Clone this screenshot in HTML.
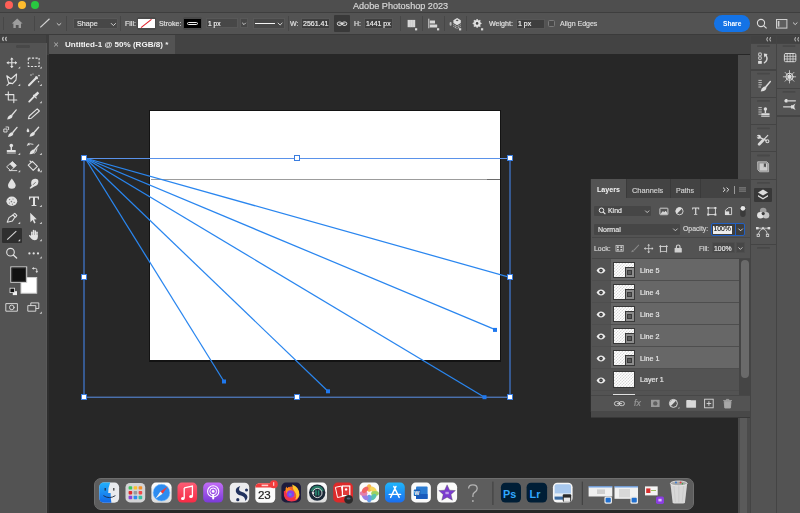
<!DOCTYPE html>
<html><head><meta charset="utf-8">
<style>
*{margin:0;padding:0;box-sizing:border-box}
html,body{width:800px;height:513px;overflow:hidden;background:#272727;font-family:"Liberation Sans",sans-serif;color:#d6d6d6}
.a{position:absolute}
.t{position:absolute;white-space:nowrap;line-height:1;will-change:transform;-webkit-text-stroke:0.18px currentColor}
svg{position:absolute;overflow:visible}
</style></head><body>
<!-- title bar -->
<div class="a" style="left:0;top:0;width:800px;height:12px;background:#4e4e4e"></div>
<div class="a" style="left:0;top:12px;width:800px;height:1px;background:#3e3e3e"></div>
<div class="a" style="left:5px;top:0.5px;width:8px;height:8px;border-radius:50%;background:#fe5f57"></div>
<div class="a" style="left:18px;top:0.5px;width:8px;height:8px;border-radius:50%;background:#febc2e"></div>
<div class="a" style="left:31px;top:0.5px;width:8px;height:8px;border-radius:50%;background:#28c840"></div>
<div class="t" style="left:353px;top:1.5px;font-size:9.1px;color:#d8d8d8">Adobe Photoshop 2023</div>

<!-- options bar -->
<div class="a" style="left:0;top:13px;width:800px;height:21.4px;background:#535353"></div>
<div class="a" style="left:0;top:34.4px;width:800px;height:1px;background:#3b3b3b"></div>


<!-- options items -->
<div class="a" style="left:3px;top:17px;width:1px;height:13px;background:#474747"></div>
<div class="a" style="left:34px;top:16px;width:1px;height:15px;background:#474747"></div>
<div class="a" style="left:66px;top:16px;width:1px;height:15px;background:#474747"></div>
<svg style="left:0;top:0" width="800" height="35">
 <path d="M11.8 23.6 L17.2 18.4 L22.6 23.6 L21 23.6 L21 28 L18.6 28 L18.6 25 L15.8 25 L15.8 28 L13.4 28 L13.4 23.6 Z" fill="#9d9d9d"/>
 <line x1="40.3" y1="27.4" x2="49.5" y2="18.8" stroke="#d4d4d4" stroke-width="1.2"/>
 <path d="M56.8 23.2 L59 25.3 L61.2 23.2" fill="none" stroke="#c8c8c8" stroke-width="1"/>
</svg>
<div class="a" style="left:73px;top:18px;width:45px;height:11px;background:#474747;border:1px solid #585858;border-radius:1px"></div>
<div class="t" style="left:77px;top:20.4px;font-size:7.2px;color:#e0e0e0">Shape</div>
<svg style="left:0;top:0" width="800" height="35">
 <path d="M111 23.2 L113.4 25.6 L115.8 23.2" fill="none" stroke="#d0d0d0" stroke-width="1"/>
</svg>
<div class="a" style="left:120px;top:16px;width:1px;height:15px;background:#474747"></div>
<div class="t" style="left:124.7px;top:20.4px;font-size:7px;color:#e0e0e0">Fill:</div>
<div class="a" style="left:137px;top:17px;width:19px;height:13px;background:#4a4a4a;border-radius:2px"></div>
<div class="a" style="left:138px;top:19px;width:16.5px;height:9px;background:#ffffff"></div>
<svg style="left:0;top:0" width="800" height="35"><line x1="141" y1="27.6" x2="151.5" y2="19.4" stroke="#e0202a" stroke-width="1.1"/></svg>
<div class="t" style="left:158.8px;top:20.8px;font-size:7.1px;color:#e0e0e0">Stroke:</div>
<div class="a" style="left:182.5px;top:17px;width:19.5px;height:13px;background:#4a4a4a;border-radius:2px"></div>
<div class="a" style="left:184px;top:19px;width:16.5px;height:9px;background:#000000"></div>
<div class="a" style="left:187px;top:22px;width:10.5px;height:3.4px;border:1px solid #f0f0f0;border-radius:1.5px"></div>
<div class="a" style="left:205.8px;top:18.2px;width:32.5px;height:9.6px;background:#474747;border:1px solid #585858"></div>
<div class="t" style="left:207.6px;top:21px;font-size:6.6px;color:#f2f2f2">1 px</div>
<div class="a" style="left:240px;top:18.2px;width:8px;height:9.6px;background:#474747;border:1px solid #585858"></div>
<svg style="left:0;top:0" width="800" height="35"><path d="M242.2 22.8 L244 24.6 L245.8 22.8" fill="none" stroke="#d0d0d0" stroke-width="1"/></svg>
<div class="a" style="left:253px;top:17.8px;width:31.5px;height:11px;background:#474747;border:1px solid #585858"></div>
<div class="a" style="left:255px;top:22.8px;width:20px;height:1.4px;background:#f4f4f4"></div>
<svg style="left:0;top:0" width="800" height="35"><path d="M277.8 22.8 L280.1 25 L282.4 22.8" fill="none" stroke="#d0d0d0" stroke-width="1"/></svg>
<div class="a" style="left:288px;top:16px;width:1px;height:14.6px;background:#474747"></div>
<div class="t" style="left:289.6px;top:20.4px;font-size:7px;color:#e0e0e0">W:</div>
<div class="a" style="left:301.3px;top:18.2px;width:28.7px;height:10.4px;background:#3e3e3e;border:1px solid #575757"></div>
<div class="t" style="left:303px;top:20.4px;font-size:7px;color:#ececec">2561.41</div>
<div class="a" style="left:334.3px;top:15.1px;width:15.7px;height:16.6px;background:#393939;border-radius:1px"></div>
<svg style="left:0;top:0" width="800" height="35">
 <rect x="337.3" y="22" width="4.6" height="3.4" rx="1.7" fill="none" stroke="#dcdcdc" stroke-width="1"/>
 <rect x="342.2" y="22" width="4.6" height="3.4" rx="1.7" fill="none" stroke="#dcdcdc" stroke-width="1"/>
 <line x1="339.5" y1="23.7" x2="344.5" y2="23.7" stroke="#dcdcdc" stroke-width="1"/>
</svg>
<div class="t" style="left:353.8px;top:20.4px;font-size:7px;color:#e0e0e0">H:</div>
<div class="a" style="left:364.4px;top:18.2px;width:28.6px;height:10.4px;background:#3e3e3e;border:1px solid #575757"></div>
<div class="t" style="left:366.4px;top:20.9px;font-size:6.95px;color:#ececec">1441 px</div>
<div class="a" style="left:400px;top:16px;width:1px;height:15px;background:#474747"></div>
<div class="a" style="left:422px;top:16px;width:1px;height:15px;background:#474747"></div>
<div class="a" style="left:444px;top:16px;width:1px;height:15px;background:#474747"></div>
<div class="a" style="left:466px;top:16px;width:1px;height:15px;background:#474747"></div>
<svg style="left:0;top:0" width="800" height="35">
 <rect x="407.6" y="19.9" width="7.6" height="7.3" fill="#d8d8d8"/>
 <line x1="410.2" y1="20" x2="410.2" y2="27.2" stroke="#bcbcbc" stroke-width="0.5"/>
 <line x1="412.7" y1="20" x2="412.7" y2="27.2" stroke="#bcbcbc" stroke-width="0.5"/>
 <rect x="415" y="28.2" width="2.2" height="2.2" fill="#d8d8d8"/>
 <line x1="428.8" y1="18.7" x2="428.8" y2="28.3" stroke="#d8d8d8" stroke-width="1"/>
 <rect x="429.8" y="20.5" width="5.2" height="3" fill="#d8d8d8"/>
 <rect x="429.8" y="24.5" width="7.4" height="3" fill="#d8d8d8"/>
 <rect x="437" y="28.2" width="2.2" height="2.2" fill="#d8d8d8"/>
 <rect x="449.6" y="22" width="2" height="3.8" rx="1" fill="#b8b8b8"/>
 <path d="M453.4 20.2 L457.1 18 L460.8 20.2 V23 L457.1 25.2 L453.4 23 Z" fill="#e0e0e0"/>
 <path d="M455.6 20.4 L457.1 19.6 L458.6 20.4 L457.1 21.2 Z" fill="#555"/>
 <path d="M453.4 24.6 L457.1 26.8 L460.8 24.6 M453.4 26.4 L457.1 28.6 L460.8 26.4" fill="none" stroke="#d0d0d0" stroke-width="0.9" stroke-dasharray="1.2 0.6"/>
 <rect x="459" y="28.2" width="2.2" height="2.2" fill="#d8d8d8"/>
 <path d="M477.10 19.00 L478.25 20.63 L480.21 20.29 L479.87 22.25 L481.50 23.40 L479.87 24.55 L480.21 26.51 L478.25 26.17 L477.10 27.80 L475.95 26.17 L473.99 26.51 L474.33 24.55 L472.70 23.40 L474.33 22.25 L473.99 20.29 L475.95 20.63 Z" fill="#e2e2e2" stroke="#e2e2e2" stroke-width="0.6" stroke-linejoin="round"/>
 <circle cx="477.1" cy="23.4" r="1.3" fill="#444"/>
 <rect x="481" y="28.2" width="2.2" height="2.2" fill="#d8d8d8"/>
</svg>
<div class="t" style="left:488.8px;top:21.1px;font-size:7.1px;color:#e0e0e0">Weight:</div>
<div class="a" style="left:515.8px;top:18.5px;width:29.2px;height:10px;background:#3e3e3e;border:1px solid #575757"></div>
<div class="t" style="left:517.5px;top:20.4px;font-size:7px;color:#f2f2f2">1 px</div>
<div class="a" style="left:548px;top:20px;width:6.8px;height:6.8px;border:1px solid #7a7a7a;border-radius:1.5px;background:#4a4a4a"></div>
<div class="t" style="left:559.6px;top:20.4px;font-size:7px;color:#dcdcdc">Align Edges</div>
<div class="a" style="left:713.7px;top:15.4px;width:36px;height:16.4px;background:#1473e6;border-radius:8.2px"></div>
<div class="t" style="left:722.7px;top:21px;font-size:6.6px;font-weight:bold;color:#ffffff;-webkit-text-stroke:0">Share</div>
<svg style="left:0;top:0" width="800" height="35">
 <circle cx="761" cy="23" r="3.6" fill="none" stroke="#dcdcdc" stroke-width="1.1"/>
 <line x1="763.6" y1="25.6" x2="766.6" y2="28.4" stroke="#dcdcdc" stroke-width="1.2"/>
 <rect x="776.5" y="19.5" width="10.4" height="8.6" fill="#5e5e5e" stroke="#cfcfcf" stroke-width="1"/>
 <rect x="777.8" y="21" width="1.6" height="5.6" fill="#cfcfcf"/>
 <path d="M793 22.5 L795.2 24.6 L797.4 22.5" fill="none" stroke="#cfcfcf" stroke-width="1"/>
</svg>

<!-- tab bar -->
<div class="a" style="left:0;top:35.4px;width:800px;height:19px;background:#434343"></div>
<div class="a" style="left:48.6px;top:35.4px;width:126.4px;height:19px;background:#535353"></div>
<svg style="left:0;top:0" width="80" height="60"><path d="M54.2 42.6 L58 46.4 M58 42.6 L54.2 46.4" stroke="#bdbdbd" stroke-width="0.9"/></svg>
<div class="t" style="left:64.6px;top:40.5px;font-size:8.07px;font-weight:bold;color:#f4f4f4;-webkit-text-stroke:0">Untitled-1 @ 50% (RGB/8) *</div>

<!-- toolbar -->
<div class="a" style="left:0;top:35px;width:46.4px;height:8px;background:#434343"></div>
<div class="a" style="left:0;top:43px;width:46px;height:470px;background:#535353"></div>
<div class="a" style="left:46.4px;top:35px;width:2.6px;height:19.5px;background:#3d3d3d"></div>
<div class="a" style="left:46.4px;top:54.5px;width:2.6px;height:458.5px;background:#2e2e2e"></div>
<div class="a" style="left:45.6px;top:43px;width:0.9px;height:470px;background:#595959"></div>


<!-- toolbar icons -->
<div class="a" style="left:16.4px;top:45.4px;width:13.5px;height:2.3px;background:#484848;border-radius:1.2px"></div>
<div class="a" style="left:1.6px;top:228px;width:20.3px;height:14.7px;background:#2f2f2f;border-radius:1px"></div>
<svg style="left:0;top:0" width="46" height="330">
 <defs><g id="br"><path d="M0.1 10.1 Q0.5 6.9 3.1 5.6 Q4.6 5 5.3 6.1 Q5.9 7.4 4.6 8.7 Q2.8 10.1 0.1 10.1 Z"/><path d="M4.2 5.5 L9 0 Q9.9 -0.2 9.9 0.8 L5.3 6.5 Z"/></g></defs>
 <g fill="none" stroke="#e2e2e2" stroke-width="1.1" stroke-linecap="round" stroke-linejoin="round">
  <path d="M3.2 37.2 L2.6 38.9 L3.2 40.6 M6.2 37.2 L5.6 38.9 L6.2 40.6" stroke="#d8d8d8"/>
  <!-- move -->
  <path d="M11.8 58.4 V67.2 M7.2 62.8 H16.4"/>
  <!-- marquee -->
  <rect x="28.3" y="58.1" width="10.8" height="8.4" stroke-dasharray="2.2 1.4" stroke-linecap="butt"/>
  <!-- lasso -->
  <path d="M6.8 75.8 L11 79 L16.6 74 L16 80 L12.6 83.6 L8.6 82.6 Z M9.6 82.8 L7 85.4"/>
  <!-- wand -->
  <path d="M29 85.3 L36.8 77.2" stroke-width="2"/>
  <!-- crop -->
  <path d="M8.3 91.7 V100 H16.8 M5.4 94.6 H13.8 V102.6"/>
  <!-- eyedropper -->
  <path d="M29.2 101.6 L35 95.6" stroke-width="1.8"/>
  <!-- pencil -->
  <path d="M28.4 118.8 L29.2 116 L37.2 108.8 L39.4 111 L31.4 118.2 Z"/>
  <!-- history small square + arrow -->
  <rect x="4.2" y="129" width="2.8" height="3" stroke-width="0.9"/>
  <path d="M6 127 H8.6 V129.6" stroke-width="0.9"/>
  <!-- history brush arrow -->
  <path d="M27.2 145.3 Q30 142.6 33 144.2 M37 148.8 Q36.6 152 34.2 153.6" stroke-width="0.9"/>
  <!-- eraser -->
  <path d="M6.9 166.6 L12.4 161.6 L16.4 165.4 L11 170.3 Z M9.2 170.6 H16.8" stroke-width="0.9"/>
  <!-- bucket -->
  <path d="M28.2 165.2 L32.4 161.4 L37.4 166.4 L33.2 170.4 Z M30 161 L31.4 162.4" />
  <!-- pen -->
  <path d="M7.2 222.2 L9 217.6 L13 215 L15 217 L12.4 221 Z M13 214.6 L14.8 213.4 L16.8 215.4 L15.6 217.2"/>
  <!-- zoom -->
  <circle cx="10.5" cy="252.2" r="3.8" stroke-width="1.1"/>
  <path d="M13.3 255 L16.6 258" stroke-width="1.4"/>
  <!-- quick mask -->
  <rect x="6.2" y="303.6" width="11.2" height="7.6" stroke-width="0.9"/>
  <circle cx="11.8" cy="307.4" r="2.3" stroke-width="0.9"/>
  <!-- screen mode -->
  <rect x="31.2" y="302.9" width="7.6" height="5.6" stroke-width="0.9"/>
  <rect x="28.2" y="305.6" width="7.6" height="5.6" stroke-width="0.9" fill="#535353"/>
  <!-- swap arrows -->
  <path d="M33 268.4 H35.4 Q36.8 268.4 36.8 269.8 V271.6" stroke-width="0.9"/><path d="M32 268.4 L33.8 267 V269.8 Z M36.8 273 L35.4 271.2 H38.2 Z" fill="#e2e2e2" stroke="none"/>
 </g>
 <g fill="#e2e2e2">
  <path d="M11.8 57.6 L10 59.6 H13.6 Z M11.8 68 L10 66 H13.6 Z M6.6 62.8 L8.6 61 V64.6 Z M17 62.8 L15 61 V64.6 Z"/>
  <path d="M18.0 68.6 H20.2 V66.4 Z M39.6 68.6 H41.8 V66.4 Z M18.0 86.0 H20.2 V83.8 Z M39.6 86.0 H41.8 V83.8 Z M39.6 103.2 H41.8 V101.0 Z M18.0 155.0 H20.2 V152.8 Z M39.6 155.0 H41.8 V152.8 Z M18.0 172.2 H20.2 V170.0 Z M39.6 172.2 H41.8 V170.0 Z M39.6 207.0 H41.8 V204.8 Z M18.0 224.0 H20.2 V221.8 Z M39.6 224.0 H41.8 V221.8 Z M18.0 241.2 H20.2 V239.0 Z M39.6 241.2 H41.8 V239.0 Z M39.6 258.4 H41.8 V256.2 Z M39.6 313.8 H41.8 V311.6 Z" fill="#d4d4d4"/>
  <!-- wand sparkles -->
  <circle cx="31" cy="75" r="0.7"/><circle cx="39" cy="75.6" r="0.8"/><circle cx="38.6" cy="81.8" r="0.7"/><circle cx="33" cy="74" r="0.6"/>
  <path d="M36 76 L38.2 78.2 L37 79.4 L34.8 77.2 Z"/>
  <!-- eyedropper head -->
  <path d="M34 94.8 L37.6 91.6 L39.2 93.2 L36 96.8 Z"/>
  <path d="M33.2 95 L36.6 98.4" stroke="#e2e2e2" stroke-width="1.1"/>
  <!-- brushes -->
  <use href="#br" transform="translate(7,109.3)"/>
  <use href="#br" transform="translate(7.8,126.8)"/>
  <use href="#br" transform="translate(29.4,126.6)"/>
  <path d="M27.9 128 Q26.4 130.4 26.6 131.2 A1.5 1.5 0 0 0 29.4 131.2 Q29.4 130.4 27.9 128 Z"/>
  <use href="#br" transform="translate(29.4,144.2)"/>
  <path d="M27 144.2 L29.4 142.6 L29.4 145.4 Z"/>
  <!-- stamp -->
  <circle cx="11.3" cy="145.6" r="1.8"/>
  <rect x="10.6" y="146.6" width="1.4" height="3.4"/>
  <rect x="6.8" y="150" width="9" height="2" rx="0.6"/>
  <rect x="6.8" y="152.4" width="9" height="1.2" fill="#bcbcbc"/>
  <!-- eraser fill -->
  <path d="M9.6 164.1 L12.4 161.6 L16.4 165.4 L13.6 168 Z"/>
  <!-- bucket drop -->
  <path d="M38.8 167.6 Q37.4 169.8 37.6 170.4 A1.2 1.2 0 0 0 40 170.4 Q40 169.8 38.8 167.6 Z"/>
  <!-- blur drop -->
  <path d="M11.8 178.6 Q8 183.6 8 185.2 A3.8 3.6 0 0 0 15.6 185.2 Q15.6 183.6 11.8 178.6 Z"/>
  <!-- smudge leaf -->
  <path d="M31.2 184 Q30.6 179.4 35 178.8 Q38.6 178.6 38.4 181.8 Q38.2 185.8 34.2 186.4 L30.6 188.8 L29.6 188 L31.8 185.6 Q31.4 185 31.2 184 Z"/><path d="M33 184.8 L35.6 182.2" stroke="#535353" stroke-width="0.8"/>
  <!-- sponge -->
  <ellipse cx="11.8" cy="201.3" rx="5.4" ry="4.7"/>
  <!-- T -->
  <path d="M29 196.6 H39 V199.4 H38 L37.6 197.8 H35 V205 H36.4 V206 H31.6 V205 H33 V197.8 H30.4 L30 199.4 H29 Z"/>
  <!-- arrow -->
  <path d="M30.2 212.8 L36.8 219.2 L34 219.4 L35.6 222.8 L34.2 223.4 L32.6 220 L30.4 222.2 Z"/>
  <!-- hand -->
  <rect x="31.1" y="231.4" width="1.5" height="6" rx="0.75"/>
  <rect x="32.8" y="229.8" width="1.5" height="7" rx="0.75"/>
  <rect x="34.5" y="230.2" width="1.5" height="7" rx="0.75"/>
  <rect x="36.2" y="231.6" width="1.5" height="6" rx="0.75"/>
  <path d="M31.1 235 H37.7 V237.6 Q37.6 240.2 34.6 240.2 Q32.4 240.2 31.4 238.8 L29 236 Q28.8 235.2 29.6 235 Q30.2 235 31.1 236 Z"/>
  <!-- dots -->
  <circle cx="29.4" cy="253.4" r="1.1"/><circle cx="33.7" cy="253.4" r="1.1"/><circle cx="38" cy="253.4" r="1.1"/>
  <!-- default colors -->
  <rect x="12.8" y="291.2" width="4.2" height="3.9" fill="#f0f0f0"/>
  <rect x="10" y="288.2" width="4.6" height="4.4" fill="#111" stroke="#e2e2e2" stroke-width="0.8"/>
 </g>
 <!-- sponge texture -->
 <g fill="#7a7a7a">
  <circle cx="9.6" cy="199.6" r="0.7"/><circle cx="13" cy="199" r="0.6"/><circle cx="11.4" cy="201.6" r="0.8"/><circle cx="14.2" cy="202.4" r="0.6"/><circle cx="9.4" cy="203" r="0.6"/><circle cx="12.4" cy="204.2" r="0.6"/>
 </g>
 <line x1="7.2" y1="239.6" x2="16.3" y2="231.2" stroke="#d6d6d6" stroke-width="1.1"/>
 <!-- fg bg -->
 <rect x="21" y="277.5" width="15.7" height="15.7" fill="#ffffff" stroke="#cfcfcf" stroke-width="1"/>
 <rect x="10.8" y="266.9" width="15.9" height="15.4" fill="#111111" stroke="#d4d4d4" stroke-width="1"/>
 <rect x="11.9" y="268" width="13.7" height="13.2" fill="none" stroke="#3a3a3a" stroke-width="0.8"/>
</svg>

<!-- canvas -->
<div class="a" style="left:49px;top:54.4px;width:689px;height:459px;background:#272727"></div>
<div class="a" style="left:149.3px;top:109.5px;width:351.8px;height:252px;background:#131313"></div>
<div class="a" style="left:150.3px;top:110.6px;width:349.9px;height:249.6px;background:#ffffff"></div>


<div class="a" style="left:150.5px;top:179px;width:349.3px;height:1px;background:#9c9c9c"></div>
<div class="a" style="left:487px;top:179px;width:12.8px;height:1px;background:#6a6a6a"></div>
<svg style="left:0;top:0" width="800" height="513">
 <g fill="none" stroke-width="1.3">
  <path d="M84 158.5 H510 M84 397.2 H510" stroke="#5a92ea" stroke-width="1"/>
  <path d="M84 158.5 V397.2 M510 158.5 V397.2" stroke="#4178d0" stroke-width="1.25"/>
 </g>
 <g stroke="#2a86ef" stroke-width="1.25" fill="none">
  <line x1="85" y1="158" x2="510" y2="277.3"/>
  <line x1="85" y1="158" x2="495.2" y2="329.6"/>
  <line x1="85" y1="158" x2="484.5" y2="397.2"/>
  <line x1="85" y1="158" x2="328" y2="391.3"/>
  <line x1="85" y1="158" x2="224" y2="381.5"/>
 </g>
 <g fill="#1f78ee">
  <rect x="222" y="379.5" width="4" height="4"/>
  <rect x="326" y="389.3" width="4" height="4"/>
  <rect x="482.5" y="395.2" width="4" height="4"/>
  <rect x="493" y="327.9" width="4" height="4"/>
 </g>
 <g fill="#ffffff" stroke="#3a7de0" stroke-width="1">
  <rect x="81.5" y="155.5" width="5" height="5"/>
  <rect x="294.5" y="155.5" width="5" height="5"/>
  <rect x="507.5" y="155.5" width="5" height="5"/>
  <rect x="81.5" y="274.5" width="5" height="5"/>
  <rect x="507.5" y="274.5" width="5" height="5"/>
  <rect x="81.5" y="394.5" width="5" height="5"/>
  <rect x="294.5" y="394.5" width="5" height="5"/>
  <rect x="507.5" y="394.5" width="5" height="5"/>
 </g>
</svg>


<!-- right strips -->
<div class="a" style="left:738px;top:54.5px;width:11.5px;height:459px;background:#4b4b4b"></div>
<div class="a" style="left:739.5px;top:418px;width:7.7px;height:95px;background:#5a5a5a"></div>
<div class="a" style="left:749.5px;top:35px;width:51px;height:478px;background:#444444"></div>
<div class="a" style="left:751px;top:35.5px;width:24.5px;height:7.5px;background:#424242"></div>
<div class="a" style="left:777.4px;top:35.5px;width:22.6px;height:7.5px;background:#424242"></div>
<div class="a" style="left:751px;top:43.5px;width:24.5px;height:25.5px;background:#535353"></div>
<div class="a" style="left:751px;top:71px;width:24.5px;height:26px;background:#535353"></div>
<div class="a" style="left:751px;top:97.8px;width:24.5px;height:26px;background:#535353"></div>
<div class="a" style="left:751px;top:124.8px;width:24.5px;height:26.4px;background:#535353"></div>
<div class="a" style="left:751px;top:152px;width:24.5px;height:26.8px;background:#535353"></div>
<div class="a" style="left:751px;top:179.6px;width:24.5px;height:64.4px;background:#535353"></div>
<div class="a" style="left:751px;top:245px;width:24.5px;height:268px;background:#535353"></div>
<div class="a" style="left:777.4px;top:43.5px;width:22.6px;height:44.4px;background:#535353"></div>
<div class="a" style="left:777.4px;top:89.2px;width:22.6px;height:26.1px;background:#535353"></div>
<div class="a" style="left:777.4px;top:116.5px;width:22.6px;height:396.5px;background:#535353"></div>
<div class="a" style="left:753.8px;top:187.6px;width:18.1px;height:14.6px;background:#383838;border-radius:1px"></div>
<svg style="left:0;top:0" width="800" height="513">
 <g fill="#484848">
  <rect x="757" y="45.2" width="13" height="1.8" rx="0.9"/>
  <rect x="757" y="72.7" width="13" height="1.8" rx="0.9"/>
  <rect x="757" y="100" width="13" height="1.8" rx="0.9"/>
  <rect x="757" y="127.4" width="13" height="1.8" rx="0.9"/>
  <rect x="757" y="154.6" width="13" height="1.8" rx="0.9"/>
  <rect x="757" y="182" width="13" height="1.8" rx="0.9"/>
  <rect x="757" y="247" width="13" height="1.8" rx="0.9"/>
  <rect x="782.5" y="45.2" width="13" height="1.8" rx="0.9"/>
  <rect x="782.5" y="91" width="13" height="1.8" rx="0.9"/>
 </g>
 <g fill="none" stroke="#d8d8d8" stroke-width="0.9" stroke-linecap="round">
  <path d="M767.4 37.6 L766.8 39.3 L767.4 41 M770.4 37.6 L769.8 39.3 L770.4 41"/>
  <path d="M795.4 37.6 L794.8 39.3 L795.4 41 M798.4 37.6 L797.8 39.3 L798.4 41"/>
  <!-- history -->
  <circle cx="760" cy="54.4" r="1.5" stroke="#bdbdbd" stroke-width="1.1"/><circle cx="760" cy="58.1" r="1.5" stroke="#bdbdbd" stroke-width="1.1"/>
  <path d="M764.4 62.8 Q768.4 60 766.2 55.6" stroke-width="1.4"/>
  <!-- brush settings list -->
  <path d="M758.8 80.4 H761.4 M758.8 82.6 H761.4 M758.8 84.8 H761.4 M758.8 87 H760.6" stroke-width="0.8"/>
  <!-- clone list -->
  <path d="M758.8 107.6 H761.4 M758.8 109.8 H761.4 M758.8 112 H761.4 M758.8 114.2 H760.6" stroke-width="0.8"/>
  <!-- tools -->
  <path d="M760.2 137.6 L766 140.4" stroke-width="1.4"/>
  <circle cx="767.4" cy="141.3" r="1.5" stroke-width="1.1"/>
  <path d="M767.8 135.4 L763.4 140" stroke-width="1.1"/>
  <path d="M762.8 140.6 L759.2 144.2" stroke-width="2.8"/>
  <!-- notes -->
  <path d="M758 161.8 H766.8 L768.6 163.6 V171.8 H759.8 L758 170 Z" fill="#8a8a8a" stroke="#c8c8c8" stroke-width="0.8"/>
  <rect x="759.6" y="163.4" width="7.8" height="7.2" fill="#cdcdcd" stroke="none"/>
  <!-- channels -->

  <!-- paths -->
  <path d="M757.6 228.2 H768.6 M763 228.4 Q759 230 758.3 234 M763 228.4 Q767 230 767.5 234" stroke-width="0.8"/>
  <!-- grid -->
  <rect x="784.4" y="53.5" width="11.4" height="8.2" rx="1.2" stroke-width="1"/>
  <path d="M784.4 56.3 H795.8 M784.4 59 H795.8 M787.2 53.5 V61.7 M790.1 53.5 V61.7 M793 53.5 V61.7" stroke-width="0.8"/>
  <!-- wheel -->
  <circle cx="789.5" cy="76.8" r="3.6" stroke-width="1"/>
  <path d="M789.5 70.6 V83 M783.3 76.8 H795.7 M785.1 72.4 L793.9 81.2 M793.9 72.4 L785.1 81.2" stroke-width="0.8"/>
  <!-- sliders -->
  <path d="M787 100.8 H795.4 M783.6 106.8 H791" stroke-width="1.3"/>
 </g>
 <g fill="#dcdcdc">
  <rect x="758.1" y="60.9" width="3.7" height="2.9" />
  <path d="M763.8 53.4 L767.6 54 L764.4 57.6 Z"/>
  <use href="#br" transform="translate(760.6,80.8) scale(1.05)"/>
  <circle cx="765.4" cy="109" r="1.7"/>
  <rect x="764.7" y="110" width="1.4" height="3.2"/>
  <rect x="761.2" y="113.2" width="8.4" height="2" rx="0.5"/>
  <rect x="761.2" y="115.6" width="8.4" height="1.4" fill="#b8b8b8"/>
  <circle cx="758.8" cy="136.8" r="2.1"/>
  <path d="M763.8 163.4 H766 V167.4 L764.9 166.4 L763.8 167.4 Z" fill="#555"/>
  <!-- layers icon -->
  <path d="M763 189.6 L768 192.6 L763 195.6 L758 192.6 Z"/>
  <path d="M758 195 L763 198 L768 195 L768 196.6 L763 199.6 L758 196.6 Z"/>
  <!-- paths anchors -->
  <rect x="756" y="227" width="2.6" height="2.4"/><rect x="767.6" y="227" width="2.6" height="2.4"/>
  <path d="M763 226.8 L764.4 228.2 L763 229.6 L761.6 228.2 Z"/>
  <rect x="757.1" y="234.2" width="2.4" height="2.3" fill="none" stroke="#dcdcdc" stroke-width="0.8"/>
  <rect x="766.3" y="234.2" width="2.4" height="2.3" fill="none" stroke="#dcdcdc" stroke-width="0.8"/>
  <path d="M785.6 99 Q783 100.8 785.6 102.6 L787.4 102.6 L787.4 99 Z"/>
  <path d="M795.6 103.6 Q793 106.8 795.6 110 L792.6 108.4 L791 108.4 L791 105.2 L792.6 105.2 Z"/>
  <rect x="787.6" y="75" width="3.6" height="3.6"/>
 </g>
 <g><circle cx="763.2" cy="211" r="3.3" fill="#9c9c9c"/><circle cx="760.4" cy="215.2" r="3.3" fill="#e2e2e2"/><circle cx="766" cy="215.2" r="3.3" fill="#c4c4c4"/><circle cx="763.2" cy="213.6" r="1.6" fill="#3a3a3a"/></g><rect x="756.4" y="136.2" width="2" height="1.1" fill="#535353"/>
</svg>



<!-- dock -->
<div class="a" style="left:94.3px;top:477.5px;width:599.5px;height:32px;background:#5d5d5d;border:1px solid #6e6e6e;border-radius:7px"></div>
<svg style="left:0;top:0" width="800" height="513">
 <defs>
  <linearGradient id="gf" x1="0" y1="0" x2="0" y2="1"><stop offset="0" stop-color="#22b0fb"/><stop offset="1" stop-color="#1267e6"/></linearGradient>
  <linearGradient id="gm" x1="0" y1="0" x2="0" y2="1"><stop offset="0" stop-color="#fb5c74"/><stop offset="1" stop-color="#f72b45"/></linearGradient>
  <linearGradient id="gp" x1="0" y1="0" x2="0" y2="1"><stop offset="0" stop-color="#c26cf6"/><stop offset="1" stop-color="#7a3ad8"/></linearGradient>
  <linearGradient id="ga" x1="0" y1="0" x2="0" y2="1"><stop offset="0" stop-color="#1fb6fb"/><stop offset="1" stop-color="#1a6ef0"/></linearGradient>
  <linearGradient id="gs" x1="0" y1="0" x2="0" y2="1"><stop offset="0" stop-color="#ffffff"/><stop offset="1" stop-color="#dcdcdc"/></linearGradient>
 </defs>
 <!-- finder -->
 <rect x="99.3" y="482.6" width="19.8" height="20.1" rx="4.6" fill="#e9ebee"/>
 <path d="M103.9 482.6 H110.2 Q108 488 108.2 493 H110.6 Q110.6 498 111.4 502.7 H103.9 Q99.3 502.7 99.3 498.1 V487.2 Q99.3 482.6 103.9 482.6 Z" fill="url(#gf)"/>
 <rect x="104.6" y="488" width="1.2" height="2.6" fill="#1b2a44"/><rect x="113.2" y="488" width="1.2" height="2.6" fill="#333"/>
 <path d="M103.4 495.6 Q109.2 499.6 115.4 495.6" fill="none" stroke="#1b2a44" stroke-width="0.9"/>
 <!-- launchpad -->
 <rect x="125.5" y="482.9" width="19.7" height="19.5" rx="4.5" fill="#d4d4d6"/>
 <g>
  <rect x="128.6" y="486.2" width="3.6" height="3.4" rx="0.8" fill="#3ac65a"/><rect x="133.6" y="486.2" width="3.6" height="3.4" rx="0.8" fill="#fcc02c"/><rect x="138.6" y="486.2" width="3.6" height="3.4" rx="0.8" fill="#f6902a"/>
  <rect x="128.6" y="491" width="3.6" height="3.4" rx="0.8" fill="#e22c2c"/><rect x="133.6" y="491" width="3.6" height="3.4" rx="0.8" fill="#9a9a9a"/><rect x="138.6" y="491" width="3.6" height="3.4" rx="0.8" fill="#f04a4a"/>
  <rect x="128.6" y="495.8" width="3.6" height="3.4" rx="0.8" fill="#8a44d8"/><rect x="133.6" y="495.8" width="3.6" height="3.4" rx="0.8" fill="#2a8cf0"/><rect x="138.6" y="495.8" width="3.6" height="3.4" rx="0.8" fill="#36c0a0"/>
 </g>
 <!-- safari -->
 <rect x="151.4" y="482.6" width="20.2" height="20.2" rx="4.6" fill="url(#gs)"/>
 <circle cx="161.5" cy="492.7" r="8.4" fill="#2d8cf0"/>
 <circle cx="161.5" cy="492.7" r="8.4" fill="none" stroke="#7cc0ff" stroke-width="0.6"/>
 <path d="M167.6 486.6 L162.6 493.8 L160.4 491.6 Z" fill="#f03a3a"/>
 <path d="M155.4 498.8 L160.4 491.6 L162.6 493.8 Z" fill="#f4f4f4"/>
 <!-- music -->
 <rect x="177.5" y="482.6" width="19.6" height="19.9" rx="4.5" fill="url(#gm)"/>
 <path d="M184.2 487.8 L192.4 486 V496.4" fill="none" stroke="#fff" stroke-width="1.3"/>
 <path d="M184.2 488 V498.2" fill="none" stroke="#fff" stroke-width="1.3"/>
 <ellipse cx="182.8" cy="498.4" rx="1.8" ry="1.5" fill="#fff"/><ellipse cx="191" cy="496.6" rx="1.8" ry="1.5" fill="#fff"/>
 <!-- podcasts -->
 <rect x="203.2" y="482.6" width="20" height="20" rx="4.6" fill="url(#gp)"/>
 <circle cx="213.2" cy="491.4" r="5.6" fill="none" stroke="#fff" stroke-width="1.1"/>
 <circle cx="213.2" cy="491.4" r="3.4" fill="none" stroke="#fff" stroke-width="1"/>
 <circle cx="213.2" cy="491.4" r="1.4" fill="#fff"/>
 <rect x="212.2" y="494" width="2" height="5.6" rx="1" fill="#fff"/>
 <!-- scrivener -->
 <rect x="229.8" y="482.8" width="19.4" height="19.8" rx="4.5" fill="#ececee"/>
 <path d="M240.2 486 Q235.4 487.6 235.8 491.2 Q236.4 494.4 241 495.6 Q245 496.6 245.4 501 Q248.8 497.6 246.6 494.8 Q244.6 492.6 240.8 491.6 Q237.6 490.4 240.2 486 Z" fill="#22325e"/>
 <circle cx="246.5" cy="490.1" r="1.5" fill="#22325e"/><circle cx="237.8" cy="499.7" r="1.6" fill="#22325e"/>
 <!-- calendar -->
 <rect x="255.3" y="483.2" width="19.9" height="19.5" rx="4.5" fill="#fafafa"/>
 <path d="M259.8 483.2 H270.7 Q275.2 483.2 275.2 487.7 V487.6 H255.3 V487.7 Q255.3 483.2 259.8 483.2 Z" fill="#f23b3b"/>
 <circle cx="273.8" cy="484.3" r="4" fill="#f23b3b"/>
 <rect x="273.3" y="482.2" width="0.9" height="3.6" fill="#fff"/>
 <rect x="261.6" y="484.6" width="6.6" height="1.6" fill="#ffd0d0"/>
 <!-- firefox -->
 <rect x="281.4" y="482.6" width="19.6" height="19.8" rx="4.5" fill="#1d1b3c"/>
 <circle cx="291.6" cy="493.2" r="6.6" fill="#f0602e"/>
 <path d="M283.8 491.2 Q283 501 291.2 501.4 Q299 501.6 299.6 494.2 Q296.8 497.8 291.6 497.4 Q286.6 496.8 286 490.2 Z" fill="#f2344a"/>
 <path d="M285.6 490.6 Q285.2 487.6 286.6 486.4 L287.2 488.4 L288.4 487 Q290 489.6 292.4 490.2 L291.4 492.6 L286.4 493.2 Z" fill="#ff8a1c"/>
 <path d="M292.2 484.4 Q299.8 487 299.4 494.8 Q298.6 498.6 295.2 499.6 Q297.6 495.4 294.6 491.6 Q292.6 489 292.2 484.4 Z" fill="#ffc62a"/>
 <circle cx="290.6" cy="494" r="3.8" fill="#8c3ee6"/>
 <circle cx="290.2" cy="494.4" r="1.6" fill="#5a7ee8"/>
 <!-- time machine -->
 <rect x="307.3" y="482.6" width="19.7" height="19.9" rx="4.5" fill="url(#gs)"/>
 <circle cx="317.2" cy="492.6" r="8.2" fill="#1b2838"/>
 <path d="M310.6 491 A6.8 6.8 0 0 1 323.8 491 L321.4 491.6 A4.4 4.4 0 0 0 313 491.6 Z" fill="#2a7c68"/>
 <circle cx="317.4" cy="493" r="4.6" fill="none" stroke="#e8e8e8" stroke-width="0.9"/>
 <path d="M316 490.2 V495.6 M318.6 490.2 V495.6" stroke="#2a8a72" stroke-width="1.6"/>
 <path d="M311.6 492.2 L313.2 494.6 L314.6 492.4 Z" fill="#fff"/>
 <!-- photo booth -->
 <rect x="333.2" y="482.6" width="19.8" height="19.8" rx="4.5" fill="#dd2a2a"/>
 <rect x="336.4" y="486.6" width="6" height="10.4" transform="rotate(-12 339.4 491.8)" fill="none" stroke="#fff" stroke-width="0.9"/>
 <rect x="341.8" y="485.4" width="8.6" height="11" fill="#fff"/>
 <rect x="343" y="486.6" width="6.2" height="8.4" fill="#e23a3a"/>
 <circle cx="346.1" cy="489.4" r="1.2" fill="#fff"/>
 <circle cx="348.6" cy="499.4" r="4.4" fill="#2b2b2b"/>
 <ellipse cx="348.6" cy="498.6" rx="2" ry="1" fill="#506080"/>
 <!-- photos -->
 <rect x="359.4" y="482.6" width="19.6" height="19.8" rx="4.5" fill="#fafafa"/>
 <g opacity="0.85">
  <ellipse cx="369.2" cy="488" rx="2.4" ry="3.8" fill="#f8a830"/>
  <ellipse cx="373.4" cy="489.8" rx="3.8" ry="2.4" fill="#f8d040" transform="rotate(45 373.4 489.8)"/>
  <ellipse cx="375" cy="493.4" rx="3.8" ry="2.4" fill="#8ccc48"/>
  <ellipse cx="373.2" cy="497" rx="3.8" ry="2.4" fill="#40b8a0" transform="rotate(-45 373.2 497)"/>
  <ellipse cx="369.2" cy="498.6" rx="2.4" ry="3.8" fill="#4a8ee8"/>
  <ellipse cx="365.2" cy="497" rx="3.8" ry="2.4" fill="#8a6ae0" transform="rotate(45 365.2 497)"/>
  <ellipse cx="363.6" cy="493.4" rx="3.8" ry="2.4" fill="#e06aa0"/>
  <ellipse cx="365.2" cy="489.8" rx="3.8" ry="2.4" fill="#f04a4a" transform="rotate(-45 365.2 489.8)"/>
 </g>
 <!-- app store -->
 <rect x="385" y="482.6" width="19.8" height="19.8" rx="4.5" fill="url(#ga)"/>
 <path d="M396 486.4 L390.6 497.4 M393.8 486.4 L399.2 497.4 M389.2 494.4 H400.6" fill="none" stroke="#fff" stroke-width="1.4" stroke-linecap="round"/>
 <!-- word -->
 <rect x="411.2" y="482.6" width="19.7" height="19.8" rx="4.5" fill="#fafafa"/>
 <rect x="416" y="486.4" width="11.6" height="12.6" rx="1" fill="#2b7cd3"/>
 <rect x="416" y="494" width="11.6" height="5" rx="0.6" fill="#185abd"/>
 <rect x="413.8" y="489.6" width="6.6" height="6.4" rx="0.8" fill="#1a5fb4"/>
 <text x="414.3" y="494.9" font-size="5.4" font-weight="bold" fill="#fff" font-family="Liberation Sans">W</text>
 <!-- imovie -->
 <rect x="437.1" y="482.6" width="20" height="20" rx="4.6" fill="#fafafa"/>
 <path d="M447.1 484.8 L449.6 490.2 L455.4 490.6 L451 494.4 L452.4 500.2 L447.1 497.2 L441.8 500.2 L443.2 494.4 L438.8 490.6 L444.6 490.2 Z" fill="#7b3bd0" stroke="#555" stroke-width="0.4"/>
 <rect x="445.4" y="491.8" width="3.4" height="2.4" fill="#c0a0e8"/>
 <!-- ? -->
 <path d="M468.6 488.6 Q468.6 484.8 472.9 484.8 Q477.2 484.8 477.2 488.6 Q477.2 491 474.6 492.4 Q472.9 493.4 472.9 495.8 V497" fill="none" stroke="#b4b4b4" stroke-width="1.3"/>
 <circle cx="472.9" cy="501" r="0.9" fill="#b4b4b4"/>
 <!-- separator -->
 <rect x="492.4" y="481.6" width="1" height="23.4" fill="#3e3e3e"/>
 <!-- ps / lr -->
 <rect x="500.9" y="482.8" width="20.1" height="19.7" rx="4.4" fill="#001e36"/>
 <text x="503" y="497.6" font-size="10.8" font-weight="bold" fill="#31a8ff" font-family="Liberation Sans">Ps</text>
 <rect x="526.6" y="482.8" width="20.5" height="19.7" rx="4.4" fill="#001e36"/>
 <text x="529.6" y="497.6" font-size="10.8" font-weight="bold" fill="#31a8ff" font-family="Liberation Sans">Lr</text>
 <!-- preview -->
 <rect x="552.9" y="482.8" width="19.7" height="19.8" rx="4.5" fill="#f6f6f6"/>
 <rect x="554.6" y="484.2" width="16.4" height="15.4" rx="2" fill="#a8c8ee"/>
 <rect x="554.6" y="493.4" width="16.4" height="3.4" fill="#e8eef4"/>
 <rect x="554.6" y="496.6" width="16.4" height="3" fill="#3a6aa0"/>
 <rect x="562.8" y="494.2" width="8.4" height="7.6" rx="1" fill="#2a2a2a"/>
 <rect x="563.8" y="497.6" width="6.4" height="4.2" fill="#e8e8e8"/>
 <!-- separator 2 -->
 <rect x="581.8" y="481.6" width="1" height="23.4" fill="#3e3e3e"/>
 <!-- windows -->
 <rect x="588.6" y="486.4" width="23.7" height="10.1" fill="#f0f0f0"/>
 <rect x="588.6" y="486.4" width="23.7" height="1" fill="#4a8ee8"/>
 <rect x="597" y="489.4" width="8" height="4.6" fill="#cfcfcf"/>
 <rect x="604.4" y="496.5" width="7.6" height="7.2" rx="1.6" fill="#e8e8e8"/>
 <rect x="605.6" y="497.7" width="5.2" height="4.8" rx="1" fill="#1f6fd0"/>
 <rect x="614.5" y="486.4" width="23.5" height="12.4" fill="#f2f2f2"/>
 <rect x="614.5" y="486.4" width="23.5" height="1" fill="#4a8ee8"/>
 <rect x="619" y="489" width="11" height="8.4" fill="#d8d8d8"/>
 <rect x="630.4" y="496.6" width="7.6" height="7.2" rx="1.6" fill="#e8e8e8"/>
 <rect x="631.6" y="497.8" width="5.2" height="4.8" rx="1" fill="#1f6fd0"/>
 <rect x="645" y="486.4" width="12.7" height="9" fill="#f4f4f4"/>
 <rect x="646.2" y="488.4" width="4.2" height="4.6" fill="#d83030"/>
 <rect x="651" y="490" width="5" height="1" fill="#a0c060"/>
 <rect x="656" y="496.5" width="8" height="7.5" rx="1.8" fill="#8a3ee0"/>
 <rect x="658.4" y="498.8" width="3.2" height="2.6" fill="#d8b8ff"/>
 <!-- trash -->
 <path d="M670.4 483.4 H687.2 L685 502.2 Q684.6 503.4 683 503.4 H674.4 Q673 503.4 672.6 502.2 Z" fill="#d8d8d8"/>
 <ellipse cx="678.8" cy="483.4" rx="8.4" ry="2.4" fill="#a8a8a8" stroke="#eeeeee" stroke-width="0.8"/>
 <path d="M674 486 L675.4 502 M678.8 486 V502.4 M683.6 486 L682.2 502" stroke="#c0c0c0" stroke-width="0.5"/>
 <circle cx="676" cy="482.6" r="1" fill="#3a7ad0"/><circle cx="680.6" cy="482.4" r="1" fill="#e04040"/><circle cx="682.4" cy="483.8" r="0.8" fill="#40a040"/>
</svg>
<div class="t" style="left:257.6px;top:489.2px;font-size:11.6px;color:#222;letter-spacing:-0.3px">23</div>

<!-- layers panel -->
<div class="a" style="left:590px;top:178.6px;width:160px;height:233px;background:#2e2e2e"></div>
<div class="a" style="left:591px;top:179.4px;width:158.6px;height:231px;background:#535353"></div>
<div class="a" style="left:625.5px;top:179.4px;width:124.1px;height:18.8px;background:#434343"></div>
<div class="a" style="left:625.5px;top:179.4px;width:0.8px;height:18.8px;background:#3a3a3a"></div>
<div class="a" style="left:669.5px;top:179.4px;width:0.8px;height:18.8px;background:#3a3a3a"></div>
<div class="a" style="left:700.3px;top:179.4px;width:0.8px;height:18.8px;background:#3a3a3a"></div>
<div class="t" style="left:597px;top:186.5px;font-size:7.1px;font-weight:bold;color:#f6f6f6;-webkit-text-stroke:0">Layers</div>
<div class="t" style="left:631.8px;top:186.5px;font-size:7.4px;color:#cfcfcf">Channels</div>
<div class="t" style="left:675.7px;top:186.5px;font-size:7.05px;color:#cfcfcf">Paths</div>
<div class="a" style="left:734.2px;top:186px;width:0.9px;height:7.6px;background:#9a9a9a"></div>
<div class="a" style="left:739px;top:187px;width:7.1px;height:5.3px;background:#6e6e6e"></div>
<svg style="left:0;top:0" width="800" height="513">
 <path d="M723 187.6 L725.2 189.7 L723 191.8 M726.6 187.6 L728.8 189.7 L726.6 191.8" fill="none" stroke="#e0e0e0" stroke-width="1"/>
 <path d="M739 188.8 H746.1 M739 190.5 H746.1" stroke="#535353" stroke-width="0.6"/>
</svg>
<!-- kind row -->
<div class="a" style="left:594.3px;top:205.6px;width:57px;height:10.4px;background:#464646;border-radius:1px"></div>
<svg style="left:0;top:0" width="800" height="513">
 <circle cx="601.5" cy="210.3" r="2.3" fill="none" stroke="#e6e6e6" stroke-width="1"/>
 <line x1="603.2" y1="212" x2="605.4" y2="214.2" stroke="#e6e6e6" stroke-width="1.1"/>
 <path d="M645.2 210.6 L647.2 212.6 L649.2 210.6" fill="none" stroke="#d0d0d0" stroke-width="0.9"/>
 <g fill="none" stroke="#dcdcdc" stroke-width="0.9">
  <rect x="659.9" y="208.2" width="8" height="6.5" rx="0.6"/>
  <path d="M661.2 213.6 L663 211.6 L664.2 212.8 L665.6 211.2 L667 213.6 Z" fill="#dcdcdc"/>
  <circle cx="679.5" cy="211.2" r="3.6"/>
  <rect x="708.2" y="208" width="7.2" height="6.6"/>
  <path d="M725.4 210.2 L728.6 207.6 H731.6 V214.6 H725.4 Z"/>
 </g>
 <path d="M676.9 213.8 A3.6 3.6 0 0 1 682.1 208.6 Z" fill="#dcdcdc"/>
 <path d="M692.2 207.6 H699.2 V209.6 H698.4 L698.2 208.6 H696.3 V214 H697.3 V214.8 H694.1 V214 H695.1 V208.6 H693.2 L693 209.6 H692.2 Z" fill="#dcdcdc"/>
 <g fill="#dcdcdc"><rect x="707.2" y="207" width="2" height="2"/><rect x="714.4" y="207" width="2" height="2"/><rect x="707.2" y="213.6" width="2" height="2"/><rect x="714.4" y="213.6" width="2" height="2"/>
 <rect x="725" y="211.4" width="4.2" height="3.6"/></g>
 <rect x="740.2" y="205.6" width="5.4" height="11.4" rx="2.7" fill="#3a3a3a"/>
 <circle cx="742.9" cy="208.3" r="2.4" fill="#e8e8e8"/>
 
</svg>
<div class="t" style="left:607.8px;top:208.4px;font-size:6.9px;color:#e6e6e6">Kind</div>
<!-- normal row -->
<div class="a" style="left:594.3px;top:224.1px;width:85.7px;height:10.5px;background:#464646;border-radius:1px"></div>
<div class="t" style="left:598.4px;top:226px;font-size:7.05px;color:#e6e6e6">Normal</div>
<svg style="left:0;top:0" width="800" height="513"><path d="M673.2 228.6 L675.4 230.8 L677.6 228.6" fill="none" stroke="#d0d0d0" stroke-width="0.9"/></svg>
<div class="t" style="left:682.6px;top:226px;font-size:6.85px;color:#d6d6d6">Opacity:</div>
<div class="a" style="left:710.9px;top:223.2px;width:34.6px;height:12.4px;border:1.2px solid #2160c4;border-radius:2px;background:#3e3e3e"></div>
<div class="a" style="left:735.4px;top:223.2px;width:1px;height:12.4px;background:#2160c4"></div>
<div class="a" style="left:713px;top:225.8px;width:18.6px;height:7.8px;background:#eeeeee"></div>
<div class="t" style="left:713.4px;top:226.3px;font-size:6.8px;color:#111;-webkit-text-stroke:0.1px #111;will-change:auto">100%</div>
<svg style="left:0;top:0" width="800" height="513"><path d="M738.4 228.6 L740.6 230.8 L742.8 228.6" fill="none" stroke="#e0e0e0" stroke-width="0.9"/></svg>
<div class="a" style="left:591.5px;top:237.2px;width:158px;height:0.8px;background:#474747"></div>
<!-- lock row -->
<div class="t" style="left:594.4px;top:246px;font-size:6.95px;color:#d6d6d6">Lock:</div>
<svg style="left:0;top:0" width="800" height="513">
 <g fill="none" stroke="#d0d0d0" stroke-width="0.8">
  <rect x="616" y="245.4" width="7.2" height="5.8"/>
  <path d="M644.4 248.6 H653 M648.7 244.6 V252.6"/>
  <rect x="660.4" y="246.4" width="6.2" height="5"/>
  <path d="M659 246.4 H668 M660.4 245 V252.6 M666.6 245 V252.6"/>
 </g>
 <g fill="#d0d0d0">
  <rect x="617" y="246.3" width="1.8" height="1.8"/><rect x="620.4" y="246.3" width="1.8" height="1.8"/><rect x="617" y="249" width="1.8" height="1.5"/><rect x="620.4" y="249" width="1.8" height="1.5"/>
  <path d="M648.7 244 L647.2 245.6 H650.2 Z M648.7 253.2 L647.2 251.6 H650.2 Z M644 248.6 L645.6 247.1 V250.1 Z M653.4 248.6 L651.8 247.1 V250.1 Z"/>
  <rect x="674.6" y="248" width="7.2" height="4.6" rx="0.6"/>
  <path d="M675.8 248.2 V246.8 A2.4 2.4 0 0 1 680.6 246.8 V248.2 H679.4 V246.8 A1.2 1.2 0 0 0 677 246.8 V248.2 Z"/>
 </g>
 <path d="M638.6 244.6 L639.2 245.2 L634 251 L633.2 250.2 Z M633.4 249.8 Q631.6 250.2 631.2 252.2 L633.2 251.8 Q634.2 251.4 634.4 250.6 Z" fill="#8a8a8a"/>
</svg>
<div class="t" style="left:698.6px;top:246px;font-size:6.5px;color:#d6d6d6">Fill:</div>
<div class="a" style="left:711.6px;top:241.8px;width:23.2px;height:11.1px;background:#474747;border:1px solid #4e4e4e"></div>
<div class="t" style="left:713.6px;top:246px;font-size:6.9px;color:#e6e6e6">100%</div>
<div class="a" style="left:736.2px;top:241.8px;width:8.8px;height:11.1px;background:#474747;border:1px solid #4e4e4e"></div>
<svg style="left:0;top:0" width="800" height="513"><path d="M738.4 247.4 L740.4 249.4 L742.4 247.4" fill="none" stroke="#d0d0d0" stroke-width="0.9"/></svg>
<div class="a" style="left:591.5px;top:258.2px;width:158px;height:0.8px;background:#474747"></div>
<!-- rows -->
<div class="a" style="left:611px;top:258.8px;width:128.2px;height:21.8px;background:#676767"></div>
<div class="a" style="left:591.5px;top:280.0px;width:147.7px;height:0.9px;background:#4e4e4e"></div>
<svg style="left:0;top:0" width="800" height="513"><path d="M596.6 270.6 C598.6 266.6 603.4 266.6 605.4 270.6 C603.4 274.6 598.6 274.6 596.6 270.6 Z" fill="#ececec"/><circle cx="601" cy="270.6" r="1.8" fill="#3c3c3c"/><circle cx="601" cy="270.6" r="0.6" fill="#777"/></svg>
<div class="a" style="left:613.2px;top:261.5px;width:21.6px;height:16.4px;background:#383838"></div>
<div class="a" style="left:614.2px;top:262.5px;width:19.6px;height:14.4px;background-color:#fff;background-image:linear-gradient(45deg,#d8d8d8 25%,transparent 25%,transparent 75%,#d8d8d8 75%),linear-gradient(45deg,#d8d8d8 25%,transparent 25%,transparent 75%,#d8d8d8 75%);background-size:3px 3px;background-position:0 0,1.5px 1.5px"></div>
<div class="a" style="left:624.5px;top:267.2px;width:10.3px;height:10.7px;background:#383838"></div>
<div class="a" style="left:625.5px;top:268.2px;width:8.3px;height:8.7px;background:#8c8c8c"></div>
<div class="a" style="left:627.4px;top:270.1px;width:4.5px;height:4.9px;background:#5a5a5a;border:1px solid #3a3a3a"></div>
<div class="t" style="left:640px;top:267.6px;font-size:7.15px;color:#e6e6e6">Line 5</div>
<div class="a" style="left:611px;top:280.8px;width:128.2px;height:21.8px;background:#676767"></div>
<div class="a" style="left:591.5px;top:302.0px;width:147.7px;height:0.9px;background:#4e4e4e"></div>
<svg style="left:0;top:0" width="800" height="513"><path d="M596.6 292.6 C598.6 288.6 603.4 288.6 605.4 292.6 C603.4 296.6 598.6 296.6 596.6 292.6 Z" fill="#ececec"/><circle cx="601" cy="292.6" r="1.8" fill="#3c3c3c"/><circle cx="601" cy="292.6" r="0.6" fill="#777"/></svg>
<div class="a" style="left:613.2px;top:283.5px;width:21.6px;height:16.4px;background:#383838"></div>
<div class="a" style="left:614.2px;top:284.5px;width:19.6px;height:14.4px;background-color:#fff;background-image:linear-gradient(45deg,#d8d8d8 25%,transparent 25%,transparent 75%,#d8d8d8 75%),linear-gradient(45deg,#d8d8d8 25%,transparent 25%,transparent 75%,#d8d8d8 75%);background-size:3px 3px;background-position:0 0,1.5px 1.5px"></div>
<div class="a" style="left:624.5px;top:289.2px;width:10.3px;height:10.7px;background:#383838"></div>
<div class="a" style="left:625.5px;top:290.2px;width:8.3px;height:8.7px;background:#8c8c8c"></div>
<div class="a" style="left:627.4px;top:292.1px;width:4.5px;height:4.9px;background:#5a5a5a;border:1px solid #3a3a3a"></div>
<div class="t" style="left:640px;top:289.6px;font-size:7.15px;color:#e6e6e6">Line 4</div>
<div class="a" style="left:611px;top:302.8px;width:128.2px;height:21.8px;background:#676767"></div>
<div class="a" style="left:591.5px;top:324.0px;width:147.7px;height:0.9px;background:#4e4e4e"></div>
<svg style="left:0;top:0" width="800" height="513"><path d="M596.6 314.6 C598.6 310.6 603.4 310.6 605.4 314.6 C603.4 318.6 598.6 318.6 596.6 314.6 Z" fill="#ececec"/><circle cx="601" cy="314.6" r="1.8" fill="#3c3c3c"/><circle cx="601" cy="314.6" r="0.6" fill="#777"/></svg>
<div class="a" style="left:613.2px;top:305.5px;width:21.6px;height:16.4px;background:#383838"></div>
<div class="a" style="left:614.2px;top:306.5px;width:19.6px;height:14.4px;background-color:#fff;background-image:linear-gradient(45deg,#d8d8d8 25%,transparent 25%,transparent 75%,#d8d8d8 75%),linear-gradient(45deg,#d8d8d8 25%,transparent 25%,transparent 75%,#d8d8d8 75%);background-size:3px 3px;background-position:0 0,1.5px 1.5px"></div>
<div class="a" style="left:624.5px;top:311.2px;width:10.3px;height:10.7px;background:#383838"></div>
<div class="a" style="left:625.5px;top:312.2px;width:8.3px;height:8.7px;background:#8c8c8c"></div>
<div class="a" style="left:627.4px;top:314.1px;width:4.5px;height:4.9px;background:#5a5a5a;border:1px solid #3a3a3a"></div>
<div class="t" style="left:640px;top:311.6px;font-size:7.15px;color:#e6e6e6">Line 3</div>
<div class="a" style="left:611px;top:324.8px;width:128.2px;height:21.8px;background:#676767"></div>
<div class="a" style="left:591.5px;top:346.0px;width:147.7px;height:0.9px;background:#4e4e4e"></div>
<svg style="left:0;top:0" width="800" height="513"><path d="M596.6 336.6 C598.6 332.6 603.4 332.6 605.4 336.6 C603.4 340.6 598.6 340.6 596.6 336.6 Z" fill="#ececec"/><circle cx="601" cy="336.6" r="1.8" fill="#3c3c3c"/><circle cx="601" cy="336.6" r="0.6" fill="#777"/></svg>
<div class="a" style="left:613.2px;top:327.5px;width:21.6px;height:16.4px;background:#383838"></div>
<div class="a" style="left:614.2px;top:328.5px;width:19.6px;height:14.4px;background-color:#fff;background-image:linear-gradient(45deg,#d8d8d8 25%,transparent 25%,transparent 75%,#d8d8d8 75%),linear-gradient(45deg,#d8d8d8 25%,transparent 25%,transparent 75%,#d8d8d8 75%);background-size:3px 3px;background-position:0 0,1.5px 1.5px"></div>
<div class="a" style="left:624.5px;top:333.2px;width:10.3px;height:10.7px;background:#383838"></div>
<div class="a" style="left:625.5px;top:334.2px;width:8.3px;height:8.7px;background:#8c8c8c"></div>
<div class="a" style="left:627.4px;top:336.1px;width:4.5px;height:4.9px;background:#5a5a5a;border:1px solid #3a3a3a"></div>
<div class="t" style="left:640px;top:333.6px;font-size:7.15px;color:#e6e6e6">Line 2</div>
<div class="a" style="left:611px;top:346.8px;width:128.2px;height:21.8px;background:#676767"></div>
<div class="a" style="left:591.5px;top:368.0px;width:147.7px;height:0.9px;background:#4e4e4e"></div>
<svg style="left:0;top:0" width="800" height="513"><path d="M596.6 358.6 C598.6 354.6 603.4 354.6 605.4 358.6 C603.4 362.6 598.6 362.6 596.6 358.6 Z" fill="#ececec"/><circle cx="601" cy="358.6" r="1.8" fill="#3c3c3c"/><circle cx="601" cy="358.6" r="0.6" fill="#777"/></svg>
<div class="a" style="left:613.2px;top:349.5px;width:21.6px;height:16.4px;background:#383838"></div>
<div class="a" style="left:614.2px;top:350.5px;width:19.6px;height:14.4px;background-color:#fff;background-image:linear-gradient(45deg,#d8d8d8 25%,transparent 25%,transparent 75%,#d8d8d8 75%),linear-gradient(45deg,#d8d8d8 25%,transparent 25%,transparent 75%,#d8d8d8 75%);background-size:3px 3px;background-position:0 0,1.5px 1.5px"></div>
<div class="a" style="left:624.5px;top:355.2px;width:10.3px;height:10.7px;background:#383838"></div>
<div class="a" style="left:625.5px;top:356.2px;width:8.3px;height:8.7px;background:#8c8c8c"></div>
<div class="a" style="left:627.4px;top:358.1px;width:4.5px;height:4.9px;background:#5a5a5a;border:1px solid #3a3a3a"></div>
<div class="t" style="left:640px;top:355.6px;font-size:7.15px;color:#e6e6e6">Line 1</div>
<div class="a" style="left:611px;top:368.6px;width:128.2px;height:21.8px;background:#535353"></div>
<div class="a" style="left:591.5px;top:389.8px;width:147.7px;height:0.9px;background:#4e4e4e"></div>
<svg style="left:0;top:0" width="800" height="513"><path d="M596.6 380.4 C598.6 376.4 603.4 376.4 605.4 380.4 C603.4 384.4 598.6 384.4 596.6 380.4 Z" fill="#ececec"/><circle cx="601" cy="380.4" r="1.8" fill="#3c3c3c"/><circle cx="601" cy="380.4" r="0.6" fill="#777"/></svg>
<div class="a" style="left:613.2px;top:371.3px;width:21.6px;height:16.4px;background:#383838"></div>
<div class="a" style="left:614.2px;top:372.3px;width:19.6px;height:14.4px;background-color:#fff;background-image:linear-gradient(45deg,#d8d8d8 25%,transparent 25%,transparent 75%,#d8d8d8 75%),linear-gradient(45deg,#d8d8d8 25%,transparent 25%,transparent 75%,#d8d8d8 75%);background-size:3px 3px;background-position:0 0,1.5px 1.5px"></div>
<div class="t" style="left:640px;top:377.4px;font-size:7.15px;color:#e6e6e6">Layer 1</div>

<div class="a" style="left:613.4px;top:393.6px;width:21.4px;height:1.4px;background:#e0e0e0"></div>
<!-- scrollbar -->
<div class="a" style="left:739.2px;top:259px;width:10.4px;height:136px;background:#454545"></div>
<div class="a" style="left:740.6px;top:259.8px;width:8.2px;height:118.4px;background:#6a6a6a;border-radius:4px"></div>
<!-- footer -->
<div class="a" style="left:591px;top:395.4px;width:158.6px;height:15.6px;background:#535353"></div>
<div class="a" style="left:591px;top:395.2px;width:158.6px;height:0.8px;background:#474747"></div>
<svg style="left:0;top:0" width="800" height="513">
 <g fill="none" stroke="#d8d8d8" stroke-width="0.9">
  <rect x="614.4" y="401.6" width="5.2" height="4" rx="2"/>
  <rect x="619.2" y="401.6" width="5.2" height="4" rx="2"/>
  <path d="M617 403.6 H622"/>
  <rect x="686.8" y="400.8" width="8.8" height="6.4" fill="#d8d8d8"/>
  <rect x="704.6" y="399.2" width="8.6" height="8.6"/>
  <path d="M708.9 401.2 V405.8 M706.6 403.5 H711.2"/>
  <path d="M724.2 401.6 H731 L730.4 408 H724.8 Z" fill="#a8a8a8" stroke="#a8a8a8"/><path d="M723.2 400.6 H732 M726.4 400.6 V399.4 H728.8 V400.6" stroke="#a8a8a8"/>
 </g>
 <rect x="651" y="399.8" width="8.6" height="7.2" fill="#9a9a9a"/>
 <circle cx="655.3" cy="403.4" r="2.2" fill="#606060"/>
 <circle cx="673.4" cy="403.4" r="4" fill="none" stroke="#d8d8d8" stroke-width="1"/>
 <path d="M670.6 406.2 A4 4 0 0 1 676.2 400.6 Z" fill="#d8d8d8"/>
 <path d="M678 408.4 H679.4 V407 Z" fill="#d8d8d8"/>
 <rect x="686.8" y="400" width="4" height="1.6" fill="#d8d8d8"/>
</svg>
<div class="t" style="left:633.6px;top:399.2px;font-size:8.6px;font-style:italic;color:#9a9a9a">fx</div>
<div class="a" style="left:591px;top:411px;width:159px;height:6px;background:#484848"></div>
<div class="a" style="left:591px;top:416.6px;width:159px;height:1px;background:#383838"></div>

</body></html>
